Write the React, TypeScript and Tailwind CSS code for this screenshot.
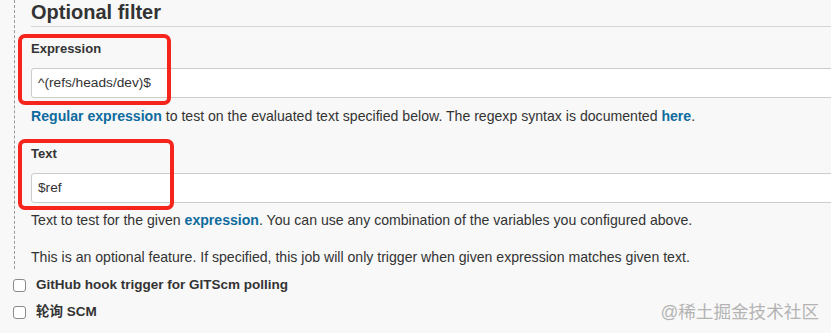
import React from 'react';

const sans = { fontFamily: '"Liberation Sans", "Noto Sans CJK SC", Arial, sans-serif' };

function Field({ label, value, boxWidth }: { label: string; value: string; boxWidth: string }) {
  return (
    <div className="relative">
      <div
        className={`pointer-events-none absolute -left-[13px] -top-[7px] h-[71px] rounded-[7px] border-[4px] border-[#f5241c] ${boxWidth}`}
        aria-hidden
      />
      <div className="text-[13px] font-bold leading-[16px] text-[#333]">{label}</div>
      <div className="mt-[11px] flex h-[30px] w-[calc(100%+12px)] items-center rounded-[3px] border border-[#ccc] bg-white px-[6px] text-[13.7px] text-[#333]">
        {value}
      </div>
    </div>
  );
}

export default function App() {
  return (
    <div className="relative h-[333px] w-[831px] overflow-hidden bg-[#f8f8f8] text-[#333]" style={sans}>
      <div className="pl-[14px]">
        <div className="border-l border-dashed border-[#999] pb-[4px] pl-[16px]">
          <h2 className="h-[27px] border-b border-[#d6d6d6] pt-[1px] text-[20px] font-bold leading-[22px] text-[#333]">
            Optional filter
          </h2>

          <div className="mt-[14px]">
            <Field label="Expression" value="^(refs/heads/dev)$" boxWidth="w-[153px]" />
          </div>
          <p className="mt-[10px] text-[14.1px] leading-[16px]">
            <a className="font-bold text-[#0d6b9e]">Regular expression</a> to test on the evaluated text specified
            below. The regexp syntax is documented <a className="font-bold text-[#0d6b9e]">here</a>.
          </p>

          <div className="mt-[22px]">
            <Field label="Text" value="$ref" boxWidth="w-[156px]" />
          </div>
          <p className="mt-[9px] text-[14.1px] leading-[16px]">
            Text to test for the given <a className="font-bold text-[#0d6b9e]">expression</a>. You can use any
            combination of the variables you configured above.
          </p>
          <p className="mt-[21px] text-[14.1px] leading-[16px]">
            This is an optional feature. If specified, this job will only trigger when given expression matches given
            text.
          </p>
        </div>
      </div>

      <div className="mt-[6px] flex flex-col gap-[7px] pl-[13px]">
        <label className="flex h-[20px] items-center gap-[10px]">
          <span className="h-[13px] w-[13px] rounded-[3px] border border-[#8a8a8a] bg-white" />
          <span className="text-[13.5px] font-bold text-[#333]">GitHub hook trigger for GITScm polling</span>
        </label>
        <label className="flex h-[20px] items-center gap-[10px]">
          <span className="h-[13px] w-[13px] rounded-[3px] border border-[#8a8a8a] bg-white" />
          <span className="text-[13.5px] font-bold text-[#333]">轮询 SCM</span>
        </label>
      </div>

      <div className="pointer-events-none absolute bottom-[11px] right-[12px] text-[17.6px] leading-[20px] text-[#b4b4b4]">
        @稀土掘金技术社区
      </div>
    </div>
  );
}
